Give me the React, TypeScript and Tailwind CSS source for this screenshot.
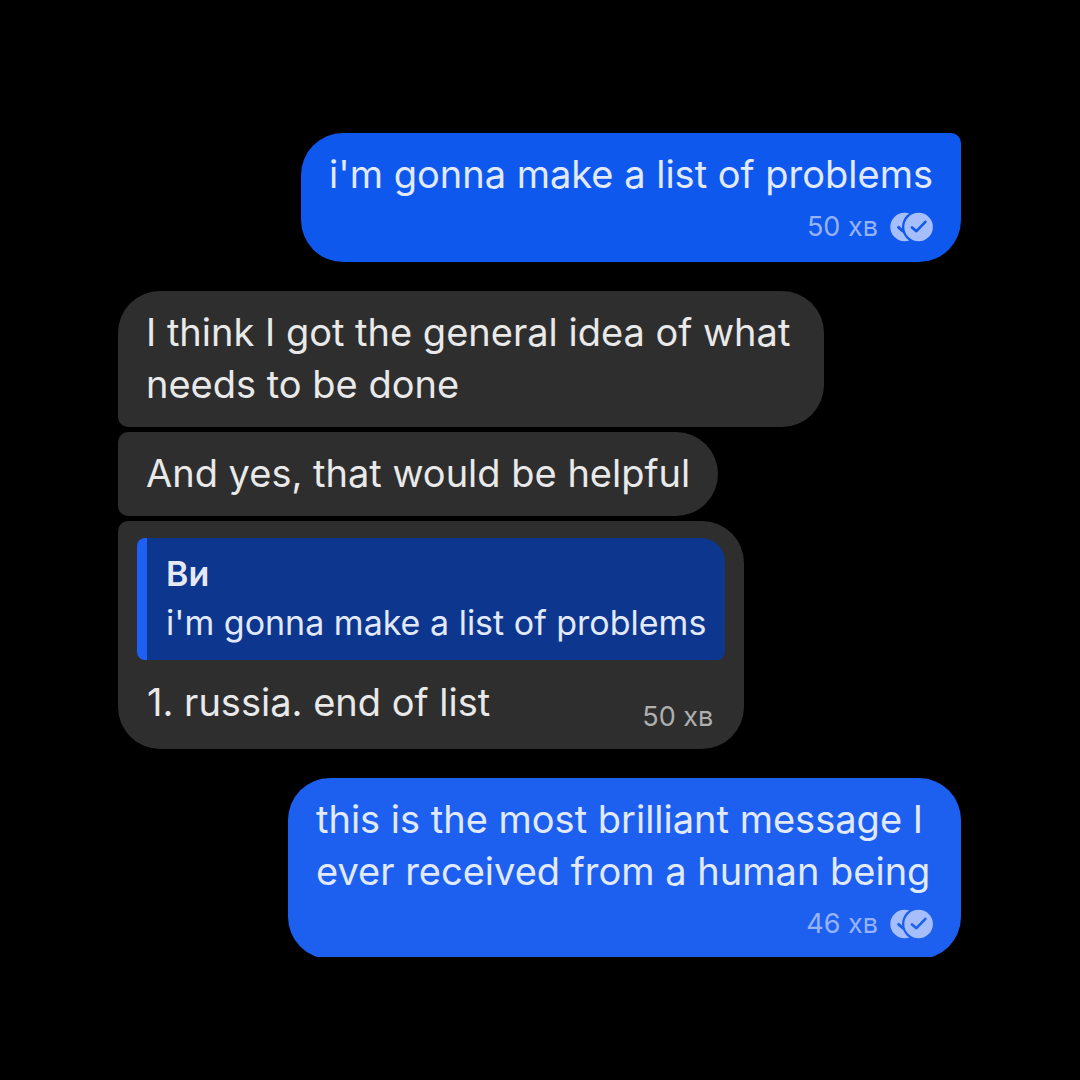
import { useId, type ReactNode } from "react";

function ReadReceipt() {
  const id = useId();
  return (
    <svg viewBox="0 0 44 30" className="h-[30px] w-11 shrink-0" role="img" aria-label="Read">
      <defs>
        <mask id={`${id}-back`}>
          <rect width="44" height="30" fill="#fff" />
          <path d="M9.6 15.4l4.4 3.8 9-9.4" fill="none" stroke="#000" strokeWidth="3" strokeLinecap="round" strokeLinejoin="round" />
          <circle cx="29.6" cy="15" r="16.6" fill="#000" />
        </mask>
        <mask id={`${id}-front`}>
          <rect width="44" height="30" fill="#fff" />
          <path d="M23 15.4l4.4 3.8 9-9.4" fill="none" stroke="#000" strokeWidth="2.6" strokeLinecap="round" strokeLinejoin="round" />
        </mask>
      </defs>
      <circle cx="15.6" cy="15" r="14.3" className="fill-[#a6bffc]" mask={`url(#${id}-back)`} />
      <circle cx="29.6" cy="15" r="14.3" className="fill-[#a6bffc]" mask={`url(#${id}-front)`} />
    </svg>
  );
}

function Sent({ className, time, children }: { className: string; time: string; children: ReactNode }) {
  return (
    <article className={`w-fit self-end px-7 pt-[15px] pb-5 ${className}`}>
      <p className="text-[#e1e9fd]">{children}</p>
      <footer className="mt-3 flex h-[30px] items-center justify-end gap-[11px] text-[27px] text-[#96b3fa]">
        <time>{time}</time>
        <ReadReceipt />
      </footer>
    </article>
  );
}

export default function App() {
  return (
    <main className="flex min-h-screen flex-col bg-black pt-[133px] pr-[119px] pb-20 pl-[118px] font-['Inter','Noto_Sans',sans-serif] text-[38px] leading-[52px] text-[#e9e9e9]">
      <Sent className="rounded-[42px] rounded-tr-[10px] bg-[#0f58ee]" time="50 хв">
        i'm gonna make a list of problems
      </Sent>

      <section className="my-[29px] flex flex-col items-start gap-[5px]">
        <article className="max-w-[706px] rounded-[42px] rounded-bl-[10px] bg-[#2e2e2e] px-7 pt-[15px] pb-[17px]">
          <p>I think I got the general idea of what needs to be done</p>
        </article>
        <article className="rounded-[42px] rounded-l-[10px] bg-[#2e2e2e] px-7 pt-[15px] pb-[17px]">
          <p>And yes, that would be helpful</p>
        </article>
        <article className="rounded-[42px] rounded-tl-[10px] bg-[#2e2e2e] px-[19px] pt-[17px] pb-3">
          <blockquote className="overflow-hidden rounded-lg rounded-tr-[24px] border-l-[10px] border-[#1d60f3] bg-[#0d368e] px-[19px] py-3">
            <cite className="block text-[34px] leading-[48px] font-semibold text-[#e5e9f3] not-italic">Ви</cite>
            <p className="text-[34px] leading-[50px] text-[#e1e9fa]">i'm gonna make a list of problems</p>
          </blockquote>
          <div className="mt-4 flex items-end justify-between pr-3 pl-[10px]">
            <p className="mb-[9px]">1. russia. end of list</p>
            <time className="text-[27px] leading-[40px] text-[#afafaf]">50 хв</time>
          </div>
        </article>
      </section>

      <Sent className="max-w-[673px] rounded-[42px] bg-[#1d60ef] [clip-path:inset(0_0_2px_0)]" time="46 хв">
        this is the most brilliant message I ever received from a human being
      </Sent>
    </main>
  );
}
